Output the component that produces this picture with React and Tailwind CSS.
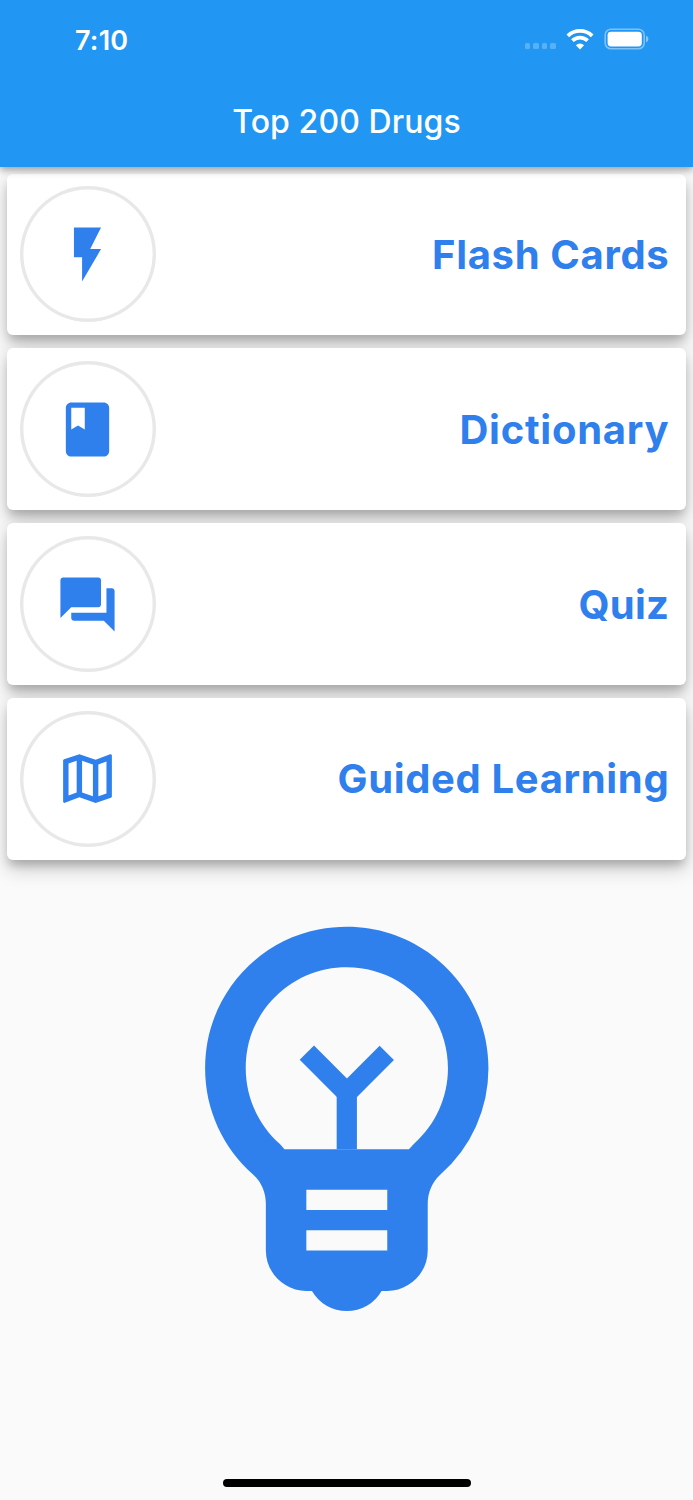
import { MdBook, MdFlashOn, MdOutlineEmojiObjects, MdOutlineMap, MdQuestionAnswer } from "react-icons/md";

const menuItems = [
  { icon: MdFlashOn, label: "Flash Cards", tracking: "tracking-[0.65px]" },
  { icon: MdBook, label: "Dictionary", tracking: "tracking-[0.75px]" },
  { icon: MdQuestionAnswer, label: "Quiz", tracking: "tracking-[0.3px]" },
  { icon: MdOutlineMap, label: "Guided Learning", tracking: "tracking-[0.65px]" },
];

function StatusBar() {
  return (
    <div className="flex h-[78px] items-center justify-between pr-[44px] pl-[75px]">
      <div className="pt-[2px] text-[27px] leading-none font-semibold tracking-[0.2px]">7:10</div>
      <div className="flex items-center">
        <div className="mt-[14px] flex gap-[3px]">
          {[0, 1, 2, 3].map((dot) => (
            <span key={dot} className="h-[5.5px] w-[5.6px] rounded-[1.5px] bg-white/25" />
          ))}
        </div>
        <svg className="ml-[10px] h-[21px] w-[28px]" viewBox="0 0 28 21" fill="none" stroke="white">
          <path d="M1.8 6.9a17.4 17.4 0 0 1 24.4 0" strokeWidth="3.7" />
          <path d="M6.4 11.7a10.9 10.9 0 0 1 15.2 0" strokeWidth="3.7" />
          <path d="M14 20.4l-4.1-4.2a5.9 5.9 0 0 1 8.2 0z" fill="white" stroke="none" />
        </svg>
        <svg className="ml-[10px] h-[22px] w-[45px]" viewBox="0 0 45 22">
          <rect x="1.2" y="1.2" width="39" height="19.6" rx="5.8" fill="none" stroke="white" strokeOpacity="0.42" strokeWidth="1.6" />
          <rect x="3.6" y="3.8" width="34.2" height="14.6" rx="3.4" fill="white" />
          <path d="M42 7.7c1.6.6 2.4 1.8 2.4 3.4s-.8 2.8-2.4 3.4z" fill="white" fillOpacity="0.45" />
        </svg>
      </div>
    </div>
  );
}

export default function App() {
  return (
    <div className="flex h-[1500px] w-[693px] flex-col overflow-hidden bg-[#fafafa] font-['Inter',sans-serif]">
      <header className="relative z-10 h-[167px] shrink-0 bg-[#2196f3] text-white shadow-[0_3px_7px_rgba(0,0,0,0.28),0_2px_10px_rgba(0,0,0,0.12)]">
        <StatusBar />
        <h1 className="flex h-[87px] items-center justify-center text-[32px] font-[550] tracking-[0.1px]">
          Top 200 Drugs
        </h1>
      </header>

      <nav className="flex flex-col gap-[13px] px-[6.7px] pt-[6.6px]">
        {menuItems.map((item) => {
          const Icon = item.icon;

          return (
            <div
              key={item.label}
              className="flex h-[161.8px] items-center justify-between rounded-[6px] bg-white pr-[17px] pl-[13px] text-[#2f80ed] shadow-[0_7px_9px_-2px_rgba(0,0,0,0.18),0_8px_20px_rgba(0,0,0,0.22)]"
            >
              <div className="flex h-[136px] w-[136px] items-center justify-center rounded-full inset-ring-[3.4px] inset-ring-[#e8e8e8]">
                <Icon className="h-[65px] w-[65px]" />
              </div>
              <span className={`pt-[1.2px] text-[40px] leading-none font-bold ${item.tracking}`}>{item.label}</span>
            </div>
          );
        })}
      </nav>

      <div className="mt-[6px] flex justify-center">
        <MdOutlineEmojiObjects className="h-[485.6px] w-[485.6px] text-[#2f80ed]" />
      </div>

      <div className="mx-auto mt-auto mb-[13px] h-[8px] w-[248px] shrink-0 rounded-full bg-black" />
    </div>
  );
}
